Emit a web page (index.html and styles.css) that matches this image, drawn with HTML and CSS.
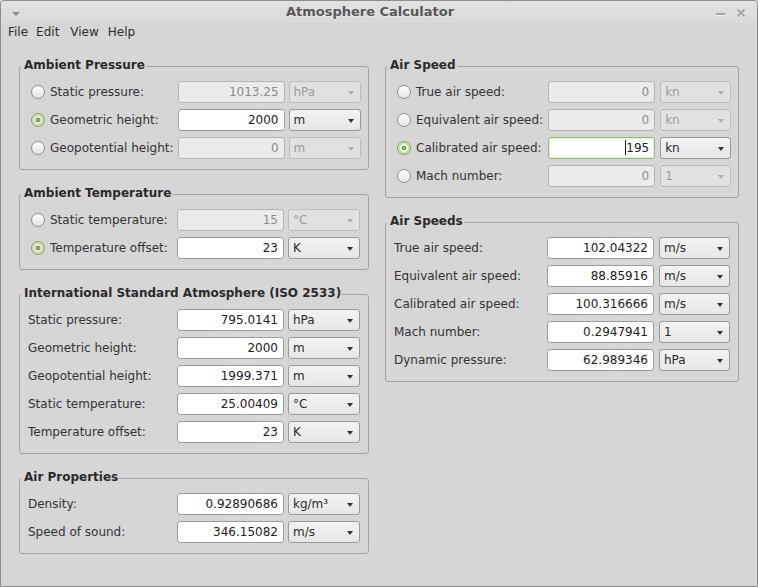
FILE: index.html
```html
<!DOCTYPE html>
<html lang="en">
<head>
<meta charset="utf-8">
<title>Atmosphere Calculator</title>
<link rel="stylesheet" href="styles.css">
</head>
<body>
<div class="window">
  <div class="titlebar">
    <div class="tb-left"><span class="tb-menu"></span></div>
    <div class="tb-title">Atmosphere Calculator</div>
    <div class="tb-right">
      <svg class="tb-min" width="9" height="4" viewBox="0 0 9 4"><rect x="0" y="1" width="9" height="2" fill="#a2a2a2"/><rect x="0" y="3" width="9" height="1" fill="#f2f2f2"/></svg>
      <svg class="tb-close" width="10" height="10" viewBox="0 0 10 10"><path d="M1.5 2.5 L8.5 9.5 M8.5 2.5 L1.5 9.5" stroke="#f4f4f4" stroke-width="2"/><path d="M1.5 1.5 L8.5 8.5 M8.5 1.5 L1.5 8.5" stroke="#a4a4a4" stroke-width="2"/></svg>
    </div>
  </div>
  <div class="menubar">
    <span class="menu-item m-file">File</span>
    <span class="menu-item m-edit">Edit</span>
    <span class="menu-item m-view">View</span>
    <span class="menu-item">Help</span>
  </div>
  <div class="content">
    <div class="col col-left">
      <section class="group">
        <div class="group-title">Ambient Pressure</div>
        <div class="grid radios">
          <div class="lab"><span class="radio"></span>Static pressure:</div>
          <div class="field disabled">1013.25</div>
          <div class="combo disabled">hPa</div>
          <div class="lab"><span class="radio on"></span>Geometric height:</div>
          <div class="field">2000</div>
          <div class="combo">m</div>
          <div class="lab"><span class="radio"></span>Geopotential height:</div>
          <div class="field disabled">0</div>
          <div class="combo disabled">m</div>
        </div>
      </section>
      <section class="group">
        <div class="group-title">Ambient Temperature</div>
        <div class="grid radios">
          <div class="lab"><span class="radio"></span>Static temperature:</div>
          <div class="field disabled">15</div>
          <div class="combo disabled">°C</div>
          <div class="lab"><span class="radio on"></span>Temperature offset:</div>
          <div class="field">23</div>
          <div class="combo">K</div>
        </div>
      </section>
      <section class="group">
        <div class="group-title">International Standard Atmosphere (ISO 2533)</div>
        <div class="grid">
          <div class="lab">Static pressure:</div>
          <div class="field">795.0141</div>
          <div class="combo">hPa</div>
          <div class="lab">Geometric height:</div>
          <div class="field">2000</div>
          <div class="combo">m</div>
          <div class="lab">Geopotential height:</div>
          <div class="field">1999.371</div>
          <div class="combo">m</div>
          <div class="lab">Static temperature:</div>
          <div class="field">25.00409</div>
          <div class="combo">°C</div>
          <div class="lab">Temperature offset:</div>
          <div class="field">23</div>
          <div class="combo">K</div>
        </div>
      </section>
      <section class="group">
        <div class="group-title">Air Properties</div>
        <div class="grid">
          <div class="lab">Density:</div>
          <div class="field">0.92890686</div>
          <div class="combo">kg/m³</div>
          <div class="lab">Speed of sound:</div>
          <div class="field">346.15082</div>
          <div class="combo">m/s</div>
        </div>
      </section>
    </div>
    <div class="col col-right">
      <section class="group">
        <div class="group-title">Air Speed</div>
        <div class="grid radios">
          <div class="lab"><span class="radio"></span>True air speed:</div>
          <div class="field disabled">0</div>
          <div class="combo disabled">kn</div>
          <div class="lab"><span class="radio"></span>Equivalent air speed:</div>
          <div class="field disabled">0</div>
          <div class="combo disabled">kn</div>
          <div class="lab"><span class="radio on"></span>Calibrated air speed:</div>
          <div class="field focus"><span class="caret"></span>195</div>
          <div class="combo">kn</div>
          <div class="lab"><span class="radio"></span>Mach number:</div>
          <div class="field disabled">0</div>
          <div class="combo disabled">1</div>
        </div>
      </section>
      <section class="group">
        <div class="group-title">Air Speeds</div>
        <div class="grid">
          <div class="lab">True air speed:</div>
          <div class="field">102.04322</div>
          <div class="combo">m/s</div>
          <div class="lab">Equivalent air speed:</div>
          <div class="field">88.85916</div>
          <div class="combo">m/s</div>
          <div class="lab">Calibrated air speed:</div>
          <div class="field">100.316666</div>
          <div class="combo">m/s</div>
          <div class="lab">Mach number:</div>
          <div class="field">0.2947941</div>
          <div class="combo">1</div>
          <div class="lab">Dynamic pressure:</div>
          <div class="field">62.989346</div>
          <div class="combo">hPa</div>
        </div>
      </section>
    </div>
  </div>
</div>
</body>
</html>
```
FILE: styles.css
```css
html, body {
  margin: 0;
  padding: 0;
  background: #d6d6d6;
}
body {
  font-family: "DejaVu Sans", "Liberation Sans", sans-serif;
  font-size: 12px;
  line-height: 14px;
  color: #333333;
}
.window {
  width: 758px;
  height: 587px;
  box-sizing: border-box;
  border: 1px solid #8c8c8c;
  border-radius: 4px 4px 0 0;
  background: #d6d6d6;
  display: flex;
  flex-direction: column;
  overflow: hidden;
}
.titlebar {
  flex: none;
  height: 22px;
  display: flex;
  align-items: center;
  background: linear-gradient(#e2e2e2, #d9d9d9);
}
.tb-left {
  width: 28px;
  height: 22px;
  flex: none;
}
.tb-menu {
  display: block;
  margin: 11px 0 0 11px;
  width: 0;
  height: 0;
  border-left: 4px solid transparent;
  border-right: 4px solid transparent;
  border-top: 4px solid #8e8e8e;
}
.tb-title {
  flex: 1;
  text-align: center;
  font-size: 13px;
  font-weight: bold;
  line-height: 22px;
  color: #575757;
  text-shadow: 0 1px 0 rgba(255,255,255,0.5);
}
.tb-right {
  width: 46px;
  flex: none;
  display: flex;
  align-items: center;
  height: 22px;
}
.tb-min {
  margin-left: 5px;
  margin-top: 3px;
}
.tb-close {
  margin-left: 11px;
  margin-top: 1px;
}
.menubar {
  flex: none;
  height: 18px;
  line-height: 18px;
  display: flex;
  padding-left: 7px;
  color: #2e2e2e;
}
.m-file {
  margin-right: 8px;
}
.m-edit {
  margin-right: 11px;
}
.m-view {
  margin-right: 9px;
}
.content {
  flex: 1;
  display: flex;
  gap: 16px;
  padding: 25px 0 0 18px;
}
.col-left {
  width: 350px;
  flex: none;
}
.col-right {
  width: 354px;
  flex: none;
}
.group {
  border: 1px solid #a2a2a2;
  border-radius: 3px;
  padding: 0 8px 10px 0;
}
.group + .group {
  margin-top: 24px;
}
.group-title {
  display: table;
  margin: -9px 0 0 1px;
  padding: 0 1px 0 3px;
  background: #d6d6d6;
  font-weight: bold;
  line-height: 14px;
  color: #2a2a2a;
}
.grid {
  display: grid;
  grid-auto-rows: 22px;
  row-gap: 6px;
  margin-top: 9px;
  padding-left: 8px;
}
.grid.radios {
  padding-left: 11px;
}
.col-left .grid {
  grid-template-columns: 1fr 107px 72px;
  column-gap: 4px;
}
.col-right .grid {
  grid-template-columns: 1fr 107px 71px;
  column-gap: 5px;
}
.lab {
  display: flex;
  align-items: center;
  white-space: nowrap;
  color: #333333;
}
.radio {
  flex: none;
  width: 14px;
  height: 14px;
  box-sizing: border-box;
  border-radius: 50%;
  border: 1px solid #909090;
  background: linear-gradient(#fefefe, #e4e4e4);
  margin-right: 5px;
}
.radio.on {
  border-color: #7da757;
  background: radial-gradient(circle, #7fae55 0, #7fae55 2.2px, #ffffff 2.8px, #ffffff 3.6px, #bcd9a0 4.3px, #d6e9c4 6px);
}
.field {
  box-sizing: border-box;
  height: 22px;
  border: 1px solid #9d9d9d;
  border-radius: 3px;
  background: #ffffff;
  text-align: right;
  padding-right: 5px;
  line-height: 20px;
  color: #222222;
}
.field.disabled {
  background: #ebebeb;
  border-color: #b4b4b4;
  color: #8a8a8a;
}
.field.focus {
  border-color: #8fbb6b;
  box-shadow: inset 0 0 0 1px #e3f0d6;
}
.caret {
  display: inline-block;
  width: 1px;
  height: 15px;
  background: #222222;
  vertical-align: -3px;
}
.combo {
  box-sizing: border-box;
  height: 22px;
  border: 1px solid #9a9a9a;
  border-radius: 3px;
  background: linear-gradient(#f3f3f3, #e6e6e6);
  display: flex;
  align-items: center;
  justify-content: space-between;
  padding: 0 6px 0 4px;
  line-height: 20px;
  color: #2a2a2a;
}
.combo::after {
  content: "";
  width: 0;
  height: 0;
  border-left: 3.5px solid transparent;
  border-right: 3.5px solid transparent;
  border-top: 4px solid #333333;
  margin-top: 1px;
}
.combo.disabled {
  background: #e1e1e1;
  border-color: #bcbcbc;
  color: #9a9a9a;
}
.combo.disabled::after {
  border-top-color: #acacac;
}
```
